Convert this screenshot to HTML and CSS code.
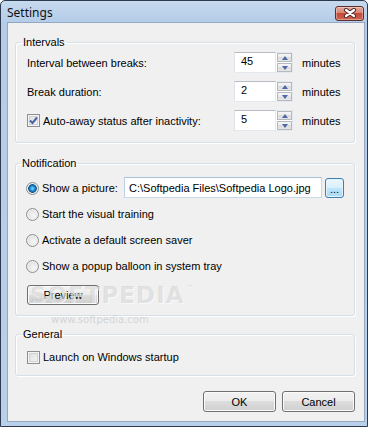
FILE: index.html
```html
<!DOCTYPE html>
<html lang="en">

<head>
    <meta charset="UTF-8">
    <meta name="viewport" content="width=device-width, initial-scale=1.0">
    <title>Settings</title>
    <link rel="stylesheet" href="styles.css">
</head>

<body>
    <div class="window">
        <div class="titlebar">
            <span class="title">Settings</span>
            <button class="close" aria-label="Close">
                <svg width="14" height="10" viewBox="0 0 14 10">
                    <path d="M3 2 L11 8 M11 2 L3 8" stroke="#4b2a2a" stroke-width="4.2" stroke-linecap="round" fill="none" />
                    <path d="M3 2 L11 8 M11 2 L3 8" stroke="#fff" stroke-width="2.2" stroke-linecap="round" fill="none" />
                </svg>
            </button>
        </div>

        <div class="client">
            <fieldset class="group intervals">
                <legend>Intervals</legend>
                <div class="grid">
                    <span>Interval between breaks:</span>
                    <div class="spin">
                        <input class="spin-value" type="text" value="45">
                        <div class="spin-btns"><span class="up"></span><span class="down"></span></div>
                    </div>
                    <span>minutes</span>

                    <span>Break duration:</span>
                    <div class="spin">
                        <input class="spin-value" type="text" value="2">
                        <div class="spin-btns"><span class="up"></span><span class="down"></span></div>
                    </div>
                    <span>minutes</span>

                    <label class="check-row">
                        <span class="check checked">
                            <svg width="9" height="9" viewBox="0 0 9 9">
                                <path d="M1 4.5 L3.5 7 L8 1.5" stroke="#4a63a8" stroke-width="2" fill="none" />
                            </svg>
                        </span>
                        Auto-away status after inactivity:
                    </label>
                    <div class="spin">
                        <input class="spin-value" type="text" value="5">
                        <div class="spin-btns"><span class="up"></span><span class="down"></span></div>
                    </div>
                    <span>minutes</span>
                </div>
            </fieldset>

            <fieldset class="group notification">
                <legend>Notification</legend>
                <div class="options">
                    <div class="option picture">
                        <label class="picture-label"><span class="radio checked"></span>Show a picture:</label>
                        <input class="textbox" type="text" value="C:\Softpedia Files\Softpedia Logo.jpg">
                        <button class="btn browse">...</button>
                    </div>
                    <label class="option"><span class="radio"></span>Start the visual training</label>
                    <label class="option"><span class="radio"></span>Activate a default screen saver</label>
                    <label class="option"><span class="radio"></span>Show a popup balloon in system tray</label>
                    <button class="btn preview">Preview</button>
                </div>
            </fieldset>

            <fieldset class="group general">
                <legend>General</legend>
                <label class="check-row"><span class="check"></span>Launch on Windows startup</label>
            </fieldset>

            <div class="actions">
                <button class="btn">OK</button>
                <button class="btn">Cancel</button>
            </div>
        </div>

        <div class="watermark">SOFTPEDIA<sup>™</sup></div>
        <div class="watermark-url">www.softpedia.com</div>
    </div>
</body>

</html>
```

FILE: styles.css
```css
* {
    padding: 0;
    margin: 0;
    box-sizing: border-box;
}

body {
    width: 368px;
    height: 427px;
    overflow: hidden;
    font: 11px "Liberation Sans", Arial, sans-serif;
    color: #000;
    background: #fff;
}

.window {
    position: relative;
    width: 368px;
    height: 427px;
    border: 1px solid #2c3b50;
    border-radius: 5px 5px 0 0;
    padding: 0 3px 5px 7px;
    display: flex;
    flex-direction: column;
    background: linear-gradient(#c6d9ef, #b4cce8 22px, #b9d0ea);
}

.titlebar {
    height: 22px;
    display: flex;
    align-items: center;
    justify-content: space-between;
}

.title {
    font: 12px "Noto Sans", sans-serif;
    margin-left: -1px;
    color: #111;
}

.close {
    width: 29px;
    height: 15px;
    margin-top: 2px;
    border: 1px solid #5e2f2a;
    border-radius: 3px;
    display: flex;
    align-items: center;
    justify-content: center;
    background: linear-gradient(#e4a99c, #d98472 45%, #c54a37 50%, #cf6451);
    box-shadow: inset 0 0 0 1px rgba(255, 255, 255, .35);
}

.client {
    flex: 1;
    background: #f0f0f0;
    padding: 13px 9px 0 7px;
    display: flex;
    flex-direction: column;
    box-shadow: 0 0 0 1px #93a8c2;
}

.group {
    border: 1px solid #d5dfe5;
    border-radius: 3px;
    box-shadow: inset 1px 1px 0 #fff, 1px 1px 0 #fff;
}

.group legend {
    line-height: 13px;
    padding: 0 2px;
    margin-left: -6px;
}

/* intervals */

.intervals {
    padding: 3px 0 11px 11px;
}

.intervals .grid {
    display: grid;
    grid-template-columns: 198px 59px auto;
    column-gap: 9px;
    row-gap: 8px;
    align-items: center;
}

.spin {
    display: flex;
    height: 21px;
}

.spin-value {
    width: 42px;
    height: 21px;
    border: 1px solid;
    border-color: #b9bdc3 #e3e9ef #e3e9ef #e2e3ea;
    padding: 0 0 3px 6px;
    font: inherit;
    background: #fff;
    outline: none;
}

.spin-btns {
    width: 17px;
    display: flex;
    flex-direction: column;
    gap: 1px;
    padding: 0 0 0 1px;
    background: #fff;
    border-top: 1px solid #e3e9ef;
    border-bottom: 1px solid #e3e9ef;
    border-right: 1px solid #e3e9ef;
}

.spin-btns span {
    flex: 1;
    border: 1px solid #b4b9c0;
    background: linear-gradient(#f7f7f7, #e8e8e8 50%, #dcdcdc 50%, #e6e6e6);
    display: flex;
    align-items: center;
    justify-content: center;
}

.spin-btns span::before {
    content: '';
    border-left: 3px solid transparent;
    border-right: 3px solid transparent;
}

.spin-btns .up::before {
    border-bottom: 4px solid #4d6aa8;
}

.spin-btns .down::before {
    border-top: 4px solid #4d6aa8;
}

.check-row {
    display: flex;
    align-items: center;
    gap: 3px;
    height: 14px;
}

.check {
    width: 13px;
    height: 13px;
    border: 1px solid #8f8f8f;
    background: linear-gradient(135deg, #dcdcdc, #f7f7f7);
    box-shadow: inset 0 0 0 1px #f4f4f4, inset 0 0 0 2px #d2d2d2;
    display: flex;
    align-items: center;
    justify-content: center;
}

/* notification */

.notification {
    margin-top: 14px;
    padding: 7px 0 10px 10px;
}

.options {
    display: flex;
    flex-direction: column;
    align-items: flex-start;
    gap: 6px;
}

.option {
    display: flex;
    align-items: center;
    gap: 3px;
    height: 20px;
}

.option.picture {
    height: 21px;
    gap: 0;
}

.picture-label {
    width: 98px;
    display: flex;
    align-items: center;
    gap: 3px;
    padding-top: 1px;
}

.radio {
    width: 13px;
    height: 13px;
    border-radius: 50%;
    border: 1px solid #8e8f8f;
    background: radial-gradient(circle at 60% 60%, #f7f7f7, #d6d6d6);
    box-shadow: inset 0 0 0 1px #f0f0f0;
}

.radio.checked {
    background: radial-gradient(circle at 50% 50%, #7fd6ff 0, #2b9be0 2px, #0b4f8c 4px, #dcdcdc 5px, #f4f4f4 6px);
}

.textbox {
    width: 198px;
    height: 21px;
    border: 1px solid;
    border-color: #a9c0d8 #c8d8e8 #c8d8e8 #bdd0e4;
    padding: 0 0 0 4px;
    font: inherit;
    background: #fff;
    outline: none;
}

.btn {
    height: 21px;
    border: 1px solid #707070;
    border-radius: 3px;
    font: inherit;
    color: #000;
    background: linear-gradient(#f2f2f2, #ebebeb 50%, #dddddd 50%, #cfcfcf);
    box-shadow: inset 0 0 0 1px #fbfbfb;
}

.btn.browse {
    width: 19px;
    height: 20px;
    margin-left: 3px;
    border-color: #3c7fb1;
    padding-top: 4px;
    line-height: 11px;
    background: linear-gradient(#eaf6fd, #d9f0fc 50%, #bee6fd 50%, #a7d9f5);
    box-shadow: inset 0 0 0 1px #e5f4fc;
}

.btn.preview {
    width: 72px;
    height: 20px;
    margin: 3px 0 0 1px;
}

/* general */

.general {
    margin-top: 12px;
    padding: 9px 0 11px 11px;
}

.actions {
    display: flex;
    justify-content: flex-end;
    gap: 6px;
    margin-top: 15px;
}

.actions .btn {
    width: 73px;
}

/* watermark laid over the dialog */

.watermark {
    position: absolute;
    left: 29px;
    top: 281px;
    font: bold 23px "DejaVu Sans", sans-serif;
    letter-spacing: 1px;
    color: rgba(150, 150, 150, .22);
    text-shadow: 1px 1px 0 rgba(255, 255, 255, .6);
    pointer-events: none;
}

.watermark sup {
    font-size: 7px;
    vertical-align: 13px;
    margin-left: 2px;
}

.watermark-url {
    position: absolute;
    left: 50px;
    top: 313px;
    font: 10px "DejaVu Sans", sans-serif;
    color: rgba(140, 140, 140, .3);
    pointer-events: none;
}
```
